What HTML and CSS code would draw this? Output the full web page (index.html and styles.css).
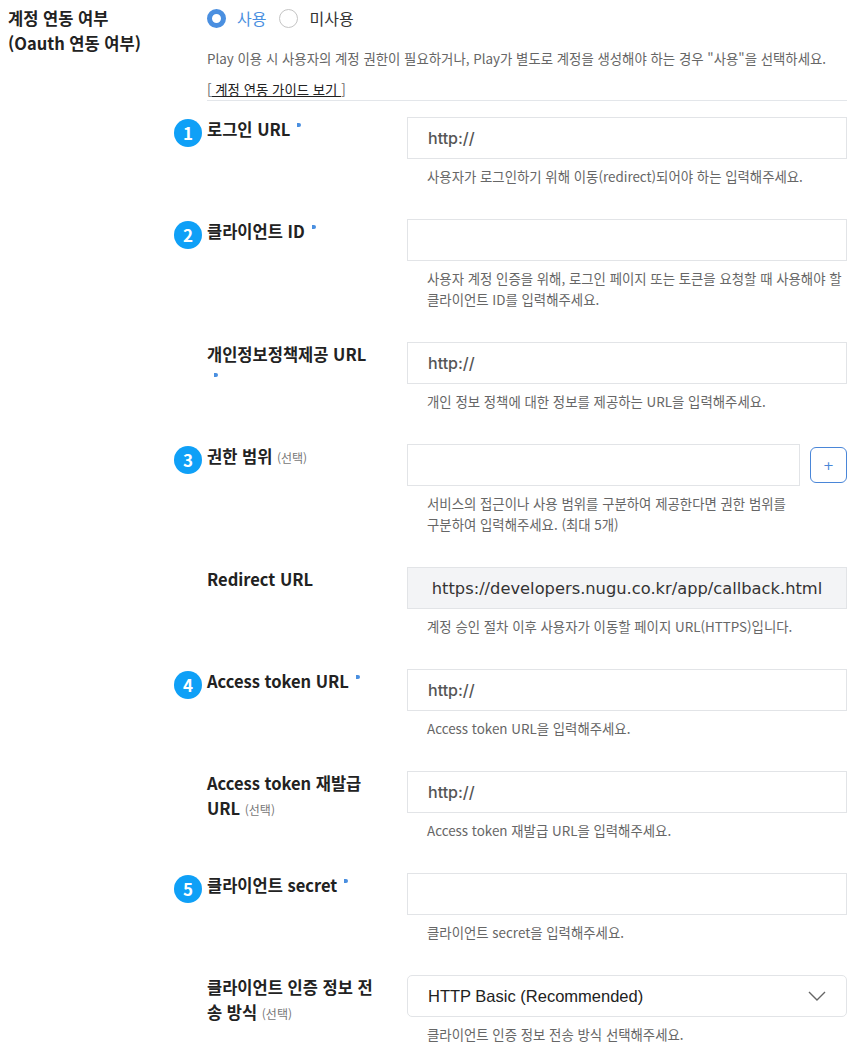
FILE: index.html
```html
<!DOCTYPE html>
<html lang="ko">
<head>
<meta charset="utf-8">
<title>계정 연동</title>
<link rel="stylesheet" href="styles.css">
</head>
<body>
<div class="page">
  <section class="oauth">
    <div class="oauth-label">계정 연동 여부<br>(Oauth 연동 여부)</div>
    <div class="oauth-body">
      <div class="radios">
        <label class="radio radio-on"><span class="radio-dot"></span><span class="radio-text">사용</span></label>
        <label class="radio"><span class="radio-dot"></span><span class="radio-text">미사용</span></label>
      </div>
      <p class="desc">Play 이용 시 사용자의 계정 권한이 필요하거나, Play가 별도로 계정을 생성해야 하는 경우 "사용"을 선택하세요.</p>
      <div class="guide"><a class="guide-link" href="#">[<u> 계정 연동 가이드 보기 </u>]</a></div>

      <div class="fields">
        <div class="field">
          <div class="field-label"><span class="badge">1</span>로그인 URL<span class="req"></span></div>
          <div class="field-control">
            <div class="input"><span class="ph">http://</span></div>
            <p class="help">사용자가 로그인하기 위해 이동(redirect)되어야 하는 입력해주세요.</p>
          </div>
        </div>

        <div class="field">
          <div class="field-label"><span class="badge">2</span>클라이언트 ID<span class="req"></span></div>
          <div class="field-control">
            <div class="input"></div>
            <p class="help">사용자 계정 인증을 위해, 로그인 페이지 또는 토큰을 요청할 때 사용해야 할 클라이언트 ID를 입력해주세요.</p>
          </div>
        </div>

        <div class="field">
          <div class="field-label">개인정보정책제공 URL<span class="req"></span></div>
          <div class="field-control">
            <div class="input"><span class="ph">http://</span></div>
            <p class="help">개인 정보 정책에 대한 정보를 제공하는 URL을 입력해주세요.</p>
          </div>
        </div>

        <div class="field">
          <div class="field-label"><span class="badge">3</span>권한 범위 <span class="opt">(선택)</span></div>
          <div class="field-control field-control-row">
            <div class="input-wrap">
              <div class="input"></div>
              <p class="help">서비스의 접근이나 사용 범위를 구분하여 제공한다면 권한 범위를 구분하여 입력해주세요. (최대 5개)</p>
            </div>
            <button class="add-btn" type="button">+</button>
          </div>
        </div>

        <div class="field">
          <div class="field-label">Redirect URL</div>
          <div class="field-control">
            <div class="input input-readonly">https://developers.nugu.co.kr/app/callback.html</div>
            <p class="help">계정 승인 절차 이후 사용자가 이동할 페이지 URL(HTTPS)입니다.</p>
          </div>
        </div>

        <div class="field">
          <div class="field-label"><span class="badge">4</span>Access token URL<span class="req"></span></div>
          <div class="field-control">
            <div class="input"><span class="ph">http://</span></div>
            <p class="help">Access token URL을 입력해주세요.</p>
          </div>
        </div>

        <div class="field">
          <div class="field-label">Access token 재발급 URL <span class="opt">(선택)</span></div>
          <div class="field-control">
            <div class="input"><span class="ph">http://</span></div>
            <p class="help">Access token 재발급 URL을 입력해주세요.</p>
          </div>
        </div>

        <div class="field">
          <div class="field-label"><span class="badge">5</span>클라이언트 secret<span class="req"></span></div>
          <div class="field-control">
            <div class="input"></div>
            <p class="help">클라이언트 secret을 입력해주세요.</p>
          </div>
        </div>

        <div class="field">
          <div class="field-label">클라이언트 인증 정보 전송 방식 <span class="opt">(선택)</span></div>
          <div class="field-control">
            <div class="select">
              <span class="select-text">HTTP Basic (Recommended)</span>
              <svg class="chevron" width="18" height="10" viewBox="0 0 18 10"><path d="M1 1 L9 9 L17 1" fill="none" stroke="#666" stroke-width="1.4"/></svg>
            </div>
            <p class="help">클라이언트 인증 정보 전송 방식 선택해주세요.</p>
          </div>
        </div>
      </div>
    </div>
  </section>
</div>
</body>
</html>
```

FILE: styles.css
```css
* { box-sizing: border-box; }

body {
  margin: 8px;
  background: #fff;
  font-family: "Noto Sans CJK KR", "Noto Sans", sans-serif;
  color: #222;
}

.page { width: 839px; }

.oauth {
  display: flex;
}

.oauth-label {
  width: 199px;
  flex: none;
  font-size: 16.5px;
  font-weight: 700;
  line-height: 25px;
  margin-top: -2px;
  color: #222;
}

.oauth-body {
  width: 640px;
}

.radios {
  display: flex;
  align-items: center;
  height: 20px;
  gap: 13px;
}

.radio {
  display: flex;
  align-items: center;
  gap: 11px;
  font-size: 16px;
  color: #333;
}

.radio-dot {
  width: 19px;
  height: 19px;
  border-radius: 50%;
  border: 1px solid #c4c4c4;
  background: #fff;
}

.radio-on .radio-dot {
  border: 5px solid #4a8fe0;
}

.radio-on .radio-text { color: #4a8fe0; }

.desc {
  margin: 20px 0 0;
  font-size: 13.4px;
  line-height: 20px;
  color: #666;
}

.guide {
  margin-top: 11px;
  padding-bottom: 1px;
  border-bottom: 1px solid #e3e6ea;
  font-size: 13.4px;
  line-height: 20px;
}

.guide-link {
  color: #666;
  text-decoration: none;
}

.guide-link u { color: #222; }

.fields {
  margin-top: 16px;
}

.field {
  display: flex;
  gap: 32px;
  margin-bottom: 32px;
}

.field-label {
  position: relative;
  width: 168px;
  flex: none;
  font-size: 16.5px;
  font-weight: 700;
  line-height: 25px;
  color: #222;
}

.badge {
  position: absolute;
  left: -33px;
  top: 2px;
  width: 28px;
  height: 28px;
  border-radius: 50%;
  background: #0fa0f7;
  color: #fff;
  font-size: 17px;
  font-weight: 700;
  line-height: 28px;
  text-align: center;
}

.req {
  display: inline-block;
  width: 11px;
  height: 4px;
  padding-left: 7px;
  background: #4a8fe0;
  background-clip: content-box;
  border-radius: 0 2px 2px 0;
  vertical-align: 9px;
}

.opt {
  font-size: 12px;
  font-weight: 400;
  color: #777;
}

.field-control {
  width: 440px;
}

.field-control-row {
  display: flex;
  align-items: flex-start;
  gap: 10px;
}

.input-wrap { width: 393px; }

.input {
  height: 42px;
  border: 1px solid #e2e4e7;
  background: #fff;
  display: flex;
  align-items: center;
  padding-left: 20px;
}

.ph {
  font-family: Inter, "Noto Sans", sans-serif;
  font-size: 16px;
  font-weight: 500;
  color: #555;
}

.input-readonly {
  justify-content: center;
  padding-left: 0;
  background: #f3f4f6;
  font-family: "DejaVu Sans", sans-serif;
  font-size: 16.3px;
  color: #333;
}

.add-btn {
  margin-top: 3px;
  width: 37px;
  height: 36px;
  border: 1px solid #4a86d8;
  border-radius: 6px;
  background: #fff;
  color: #4a86d8;
  font-family: "DejaVu Sans", sans-serif;
  font-size: 13px;
  padding: 0;
}

.help {
  margin: 7px 0 0;
  padding-left: 20px;
  font-size: 13.4px;
  line-height: 21px;
  color: #666;
  word-break: keep-all;
}

.select {
  height: 42px;
  border: 1px solid #e2e4e7;
  border-radius: 5px;
  display: flex;
  align-items: center;
  justify-content: space-between;
  padding: 0 20px 0 20px;
}

.select-text {
  font-family: "Liberation Sans", Arial, sans-serif;
  font-size: 16.5px;
  color: #222;
}

.chevron { display: block; }
```
